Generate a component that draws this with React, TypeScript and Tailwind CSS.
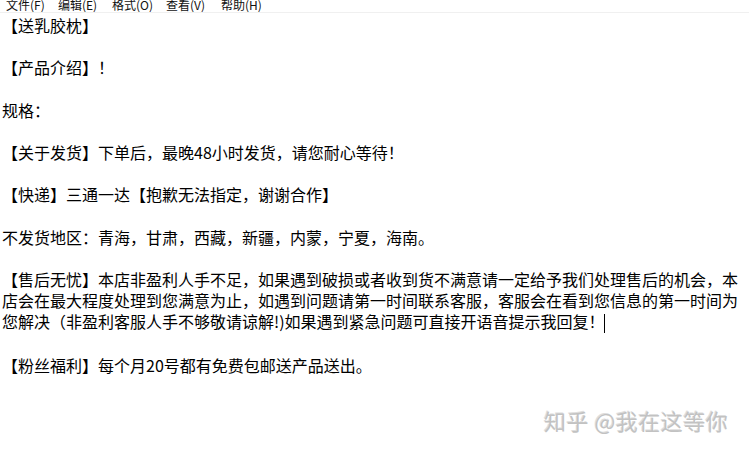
const menus = [
  { label: '文件(F)', w: 'w-[52px]' },
  { label: '编辑(E)', w: 'w-[54px]' },
  { label: '格式(O)', w: 'w-[54px]' },
  { label: '查看(V)', w: 'w-[55px]' },
  { label: '帮助(H)', w: 'w-[55px]' },
];

const font = "font-['Microsoft_YaHei','Noto_Sans_CJK_SC',sans-serif]";

export default function App() {
  return (
    <div className={`relative w-[749px] h-[453px] overflow-hidden bg-white text-black ${font}`}>
      <div className="flex h-[13px] overflow-hidden border-b border-[#f0f0f0] pl-[6px] text-[12px] leading-[10px] text-[#111]">
        {menus.map((m) => (
          <span key={m.label} className={`${m.w} shrink-0`}>
            {m.label}
          </span>
        ))}
      </div>

      <div className="px-[2px] pt-[2px] text-[16px] leading-[21.15px] whitespace-pre-wrap">
        <p>【送乳胶枕】</p>
        <p>&nbsp;</p>
        <p>【产品介绍】！</p>
        <p>&nbsp;</p>
        <p>规格：</p>
        <p>&nbsp;</p>
        <p>【关于发货】下单后，最晚48小时发货，请您耐心等待！</p>
        <p>&nbsp;</p>
        <p>【快递】三通一达【抱歉无法指定，谢谢合作】</p>
        <p>&nbsp;</p>
        <p>不发货地区：青海，甘肃，西藏，新疆，内蒙，宁夏，海南。</p>
        <p>&nbsp;</p>
        <p>
          【售后无忧】本店非盈利人手不足，如果遇到破损或者收到货不满意请一定给予我们处理售后的机会，本店会在最大程度处理到您满意为止，如遇到问题请第一时间联系客服，客服会在看到您信息的第一时间为您解决（非盈利客服人手不够敬请谅解!)如果遇到紧急问题可直接开语音提示我回复！
          <span className="-ml-[1px] inline-block h-[19px] w-px bg-black align-middle" />
        </p>
        <p>&nbsp;</p>
        <p>【粉丝福利】每个月20号都有免费包邮送产品送出。</p>
      </div>

      <div className="absolute left-[544px] top-[406px] text-[22px] leading-[28px] tracking-[0.5px] text-[#c2c2c2] [text-shadow:1px_1px_0_#ffffff,-1px_-1px_0_#dedede]">
        知乎 @我在这等你
      </div>
    </div>
  );
}
